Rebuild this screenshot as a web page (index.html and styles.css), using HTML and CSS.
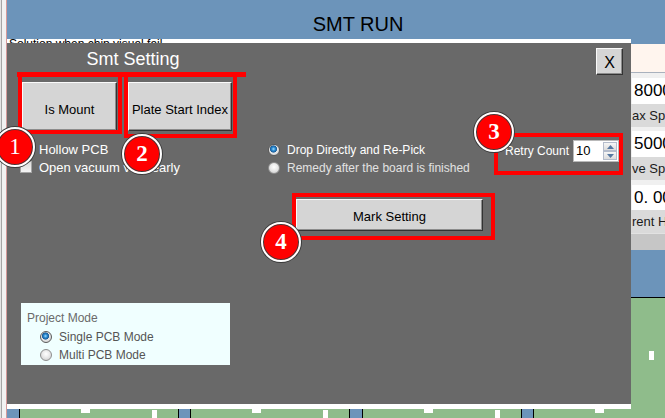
FILE: index.html
```html
<!DOCTYPE html>
<html lang="en">
<head>
<meta charset="utf-8">
<title>SMT RUN</title>
<link rel="stylesheet" href="styles.css">
</head>
<body>
<div class="app">
  <div class="frame"></div>
  <div class="main">
    <header class="header"><h1 class="app-title">SMT RUN</h1></header>
    <div class="content">
      <div class="workspace">
        <div class="hint-strip"><span>Solution when chip visual fail</span></div>
        <section class="dialog">
          <div class="titlebar">
            <div class="dlg-title">Smt Setting</div>
            <button class="bevel close-btn">X</button>
          </div>
          <div class="dlg-body">
            <div class="col-left">
              <div class="btn-row">
                <button class="bevel btn-mount">Is Mount</button>
                <button class="bevel btn-plate">Plate Start Index</button>
              </div>
              <div class="checks">
                <div class="check-row"><span class="checkbox"></span><span>Hollow PCB</span></div>
                <div class="check-row"><span class="checkbox"></span><span>Open vacuum very early</span></div>
              </div>
              <div class="mode-box">
                <div class="mode-title">Project Mode</div>
                <div class="radio-row mode-radio"><span class="radio on"></span><span>Single PCB Mode</span></div>
                <div class="radio-row mode-radio"><span class="radio"></span><span>Multi PCB Mode</span></div>
              </div>
            </div>
            <div class="col-mid">
              <div class="radio-row light"><span class="radio on"></span><span>Drop Directly and Re-Pick</span></div>
              <div class="radio-row dim"><span class="radio"></span><span>Remedy after the board is finished</span></div>
              <button class="bevel btn-mark">Mark Setting</button>
            </div>
            <div class="col-right">
              <div class="retry">
                <span class="retry-label">Retry Count</span>
                <div class="spinner">
                  <span class="spin-val">10</span>
                  <span class="spin-btns">
                    <span class="spin-btn"><svg width="7" height="4" viewBox="0 0 7 4"><path d="M0 4 L3.5 0 L7 4 Z" fill="#5577a0"/></svg></span>
                    <span class="spin-btn"><svg width="7" height="4" viewBox="0 0 7 4"><path d="M0 0 L3.5 4 L7 0 Z" fill="#5577a0"/></svg></span>
                  </span>
                </div>
              </div>
            </div>
          </div>

          <div class="mark-box box-top-bar"></div>
          <div class="mark-box box-1"></div>
          <div class="mark-box box-2"></div>
          <div class="mark-box box-3"></div>
          <div class="mark-box box-4"></div>
          <div class="badge badge-1">1</div>
          <div class="badge badge-2">2</div>
          <div class="badge badge-3">3</div>
          <div class="badge badge-4">4</div>
        </section>
        <div class="sep"></div>
        <div class="ticker">
          <div class="t-blue"></div><div class="t-line"></div>
          <div class="t-green"><span class="t-sp1"></span><span class="t-notch"></span><span class="t-sp2"></span><span class="t-bar"></span></div><div class="t-line"></div>
          <div class="t-blue narrow"></div><div class="t-line"></div>
          <div class="t-green"><span class="t-sp1"></span><span class="t-notch"></span><span class="t-sp2"></span><span class="t-bar"></span></div><div class="t-line"></div>
          <div class="t-blue"></div><div class="t-line"></div>
          <div class="t-green"><span class="t-sp1"></span><span class="t-notch"></span><span class="t-sp2"></span><span class="t-bar"></span></div><div class="t-line"></div>
          <div class="t-blue narrow"></div><div class="t-line"></div>
          <div class="t-green"><span class="t-sp1"></span><span class="t-notch"></span><span class="t-sp2"></span><span class="t-bar"></span></div>
        </div>
      </div>
      <aside class="side">
        <div class="side-top"></div>
        <div class="side-pink"></div>
        <div class="side-gap6"></div>
        <div class="side-val">8000</div>
        <div class="side-lbl">ax Spe</div>
        <div class="side-gap4"></div>
        <div class="side-val">5000</div>
        <div class="side-lbl">ve Spe</div>
        <div class="side-gap5"></div>
        <div class="side-val short">0. 00</div>
        <div class="side-lbl">rent H</div>
        <div class="side-bar"></div>
        <div class="side-blue"></div>
        <div class="side-green"><span class="side-mark"></span></div>
      </aside>
    </div>
  </div>
</div>
</body>
</html>
```

FILE: styles.css
```css
* { box-sizing: border-box; margin: 0; padding: 0; }
html, body { width: 665px; height: 418px; overflow: hidden; }
body { font-family: "Liberation Sans", Arial, sans-serif; background: #f0f0f0; color: #000; }

.app { display: flex; width: 665px; height: 418px; }
.frame {
  width: 7px; flex: none;
  background: linear-gradient(to right, #e4e4e4 0, #e4e4e4 1px, #a6a6a6 1px, #a6a6a6 2px, #f2f2f2 2px, #f2f2f2 6px, #d59a9a 6px, #d59a9a 7px);
}
.main { flex: 1; display: flex; flex-direction: column; min-width: 0; }

.header {
  height: 39px; flex: none; background: #6c94ba;
  display: flex; align-items: center; justify-content: center;
  padding-left: 44px; padding-top: 9px;
}
.app-title { font-weight: normal; font-size: 20px; line-height: 24px; color: #000; }

.content { flex: 1; display: flex; min-height: 0; }
.workspace { width: 624px; flex: none; display: flex; flex-direction: column; }

.hint-strip {
  height: 4px; background: #fff; overflow: hidden;
  font-size: 12px; line-height: 12px; padding-left: 2px; white-space: nowrap;
}
.hint-strip span { display: block; margin-top: -1px; }

.dialog { position: relative; height: 361px; background: #696969; }

.titlebar { height: 39px; display: flex; align-items: flex-start; }
.dlg-title {
  width: 252px; text-align: center; color: #fff;
  font-size: 18px; line-height: 20px; padding-top: 6px;
}

.bevel {
  font-family: "Liberation Sans", Arial, sans-serif;
  background: #d5d5d5; color: #000;
  border: 1px solid; border-color: #fafafa #333 #333 #fafafa;
  box-shadow: inset -1px -1px 0 #8c8c8c;
  display: flex; align-items: center; justify-content: center;
}
.close-btn {
  width: 27px; height: 27px; margin-left: auto; margin-right: 8px; margin-top: 5px;
  font-size: 16px; padding-top: 2px;
}

.dlg-body { display: flex; align-items: flex-start; }

.col-left { margin-left: 13px; width: 228px; flex: none; }
.btn-row { display: flex; gap: 11px; margin-left: 2px; }
.btn-mount { width: 95px; height: 49px; font-size: 13px; padding-top: 5px; }
.btn-plate { width: 104px; height: 49px; font-size: 13px; padding-top: 5px; }

.checks { margin-top: 9px; }
.check-row {
  height: 18px; display: flex; align-items: center; gap: 7px;
  color: #fff; font-size: 13px; white-space: nowrap;
}
.checkbox {
  width: 12px; height: 12px; flex: none;
  background: linear-gradient(#dcdcdc, #f4f4f4); border: 1px solid #a5a5a5;
}

.mode-box {
  margin-left: 1px; margin-top: 127px;
  width: 209px; height: 62px; background: #f0ffff;
  padding: 7px 0 0 6px;
}
.mode-title { font-size: 12px; line-height: 16px; color: #6a6a6a; margin-bottom: 2px; }
.mode-radio { margin-left: 13px; color: #555; font-size: 12.5px; }

.radio-row {
  height: 18px; display: flex; align-items: center; gap: 7px;
  font-size: 12px; white-space: nowrap;
}
.radio {
  width: 12px; height: 12px; flex: none; border-radius: 50%;
  border: 1px solid #8e8e8e;
  background: radial-gradient(circle at 50% 40%, #ffffff 0, #ececec 40%, #c8c8c8 100%);
}
.radio.on {
  border-color: #5a5a5a;
  background: radial-gradient(circle at 45% 40%, #9fdcff 0, #2a8ad0 22%, #1a5c99 40%, #e8e8e8 48%, #c9c9c9 100%);
}
.light { color: #fff; }
.dim { color: #e2e2e2; }

.col-mid { margin-left: 20px; width: 237px; flex: none; padding-top: 59px; }
.btn-mark { width: 187px; height: 32px; margin-left: 28px; margin-top: 22px; font-size: 13px; padding-top: 3px; }

.col-right { padding-top: 58px; }
.retry { display: flex; align-items: center; gap: 4px; height: 22px; }
.retry-label { color: #fff; font-size: 12px; white-space: nowrap; }
.spinner {
  width: 46px; height: 22px; background: #fff; border: 1px solid #b9b9b9;
  display: flex; align-items: center; justify-content: space-between;
  padding: 1px 1px 1px 2px;
}
.spin-val { font-size: 13px; line-height: 16px; }
.spin-btns { display: flex; flex-direction: column; gap: 0; width: 14px; height: 18px; }
.spin-btn {
  flex: 1; display: flex; align-items: center; justify-content: center;
  background: linear-gradient(#f6f6f6, #dcdcdc); border: 1px solid #b4bccb;
}

/* annotation overlays */
.mark-box { position: absolute; border: 4px solid #ff0000; }
.box-top-bar { left: 10px; top: 29px; width: 229px; height: 5px; border: 0; background: #ff0000; }
.box-1 { left: 11px; top: 30px; width: 104px; height: 61px; }
.box-2 { left: 117px; top: 30px; width: 113px; height: 65px; }
.box-3 { left: 487px; top: 90px; width: 129px; height: 42px; }
.box-4 { left: 285px; top: 150px; width: 203px; height: 47px; }

.badge {
  position: absolute; width: 40px; height: 40px; border-radius: 50%;
  background: #ff0000; border: 2px solid #fff;
  box-shadow: 0 0 0 1px #3a3a3a, inset 0 0 0 1px #3a3a3a;
  color: #fff; font-family: "Liberation Serif", "Times New Roman", serif;
  font-weight: bold; font-size: 23px; line-height: 36px; text-align: center;
}
.badge-1 { left: -12px; top: 84px; font-weight: normal; }
.badge-2 { left: 115px; top: 91px; }
.badge-3 { left: 467px; top: 69px; }
.badge-4 { left: 254px; top: 179px; }

.sep { height: 5px; background: #fff; }

.ticker { height: 9px; display: flex; overflow: hidden; }
.t-blue { width: 12px; flex: none; background: #6c94ba; }
.t-blue.narrow { width: 11px; }
.t-line { width: 1px; flex: none; background: #000; }
.t-green { width: 158px; flex: none; background: #8fbc8b; display: flex; }
.t-sp1 { width: 61px; flex: none; }
.t-notch { width: 9px; height: 4px; flex: none; background: #fff; align-self: flex-start; }
.t-sp2 { width: 62px; flex: none; }
.t-bar { width: 5px; height: 8px; flex: none; background: #fff; align-self: flex-end; }

.side { width: 34px; flex: none; display: flex; flex-direction: column; overflow: hidden; background: #f0f0f0; }
.side-top { height: 5px; background: #6c94ba; }
.side-pink { height: 29px; background: #fff5ee; border-bottom: 1px solid #a9b1bd; }
.side-gap6 { height: 5px; }
.side-gap4 { height: 4px; }
.side-gap5 { height: 5px; }
.side-val {
  height: 26px; background: #fff; font-size: 17px; line-height: 26px;
  padding-left: 2px; white-space: nowrap; overflow: hidden; margin-left: 1px;
}
.side-val.short { height: 25px; line-height: 25px; }
.side-lbl {
  height: 23px; background: #dadada; font-size: 13px; line-height: 23px;
  white-space: nowrap; overflow: hidden; color: #1a1a1a; padding-left: 1px;
}
.side-bar { height: 17px; background: #c6c6c6; border-top: 1px solid #e2e2e2; }
.side-blue { height: 48px; background: #6c94ba; border-bottom: 1px solid #000; }
.side-green { flex: 1; background: #8fbc8b; padding: 53px 0 0 18px; }
.side-mark { display: block; width: 5px; height: 9px; background: #fff; }
```
